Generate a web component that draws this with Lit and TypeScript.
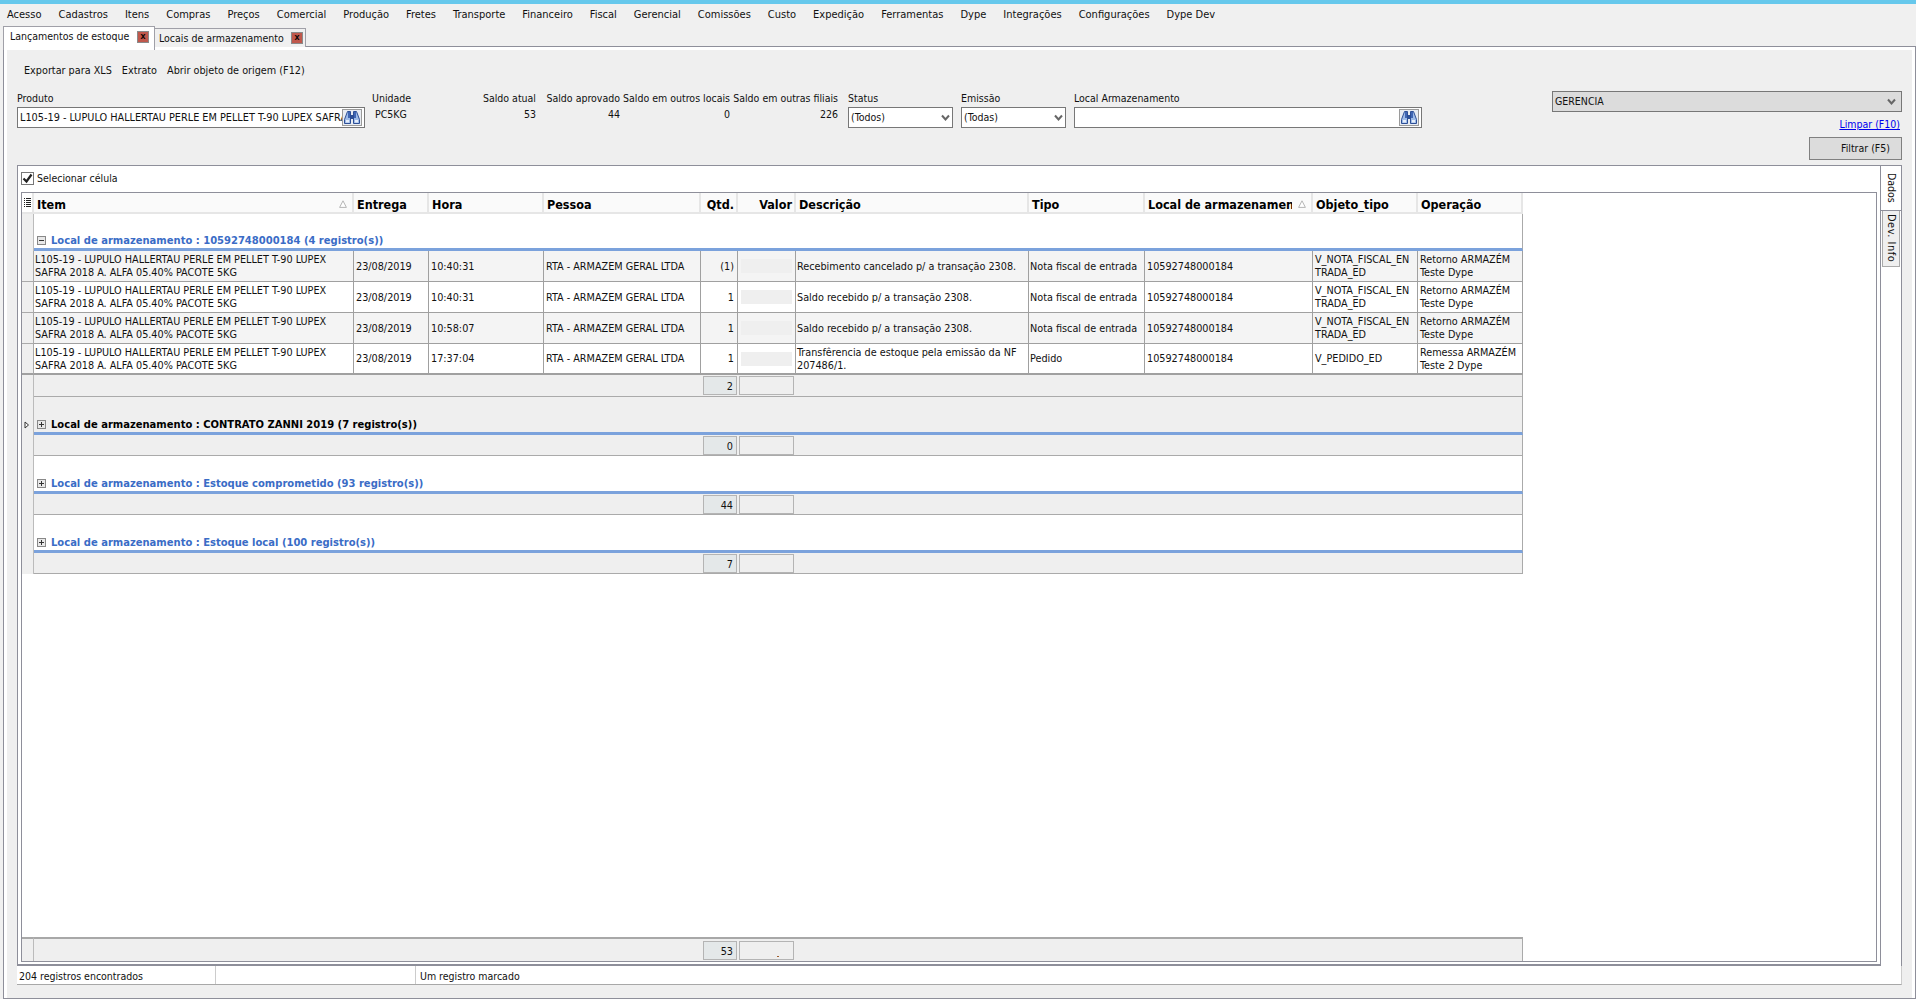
import { LitElement, css, html, svg } from 'lit';
import { customElement } from 'lit/decorators.js';

const menu = ['Acesso', 'Cadastros', 'Itens', 'Compras', 'Preços', 'Comercial', 'Produção', 'Fretes', 'Transporte', 'Financeiro', 'Fiscal', 'Gerencial', 'Comissões', 'Custo', 'Expedição', 'Ferramentas', 'Dype', 'Integrações', 'Configurações', 'Dype Dev'];

const item = 'L105-19 - LUPULO HALLERTAU PERLE EM PELLET T-90 LUPEX SAFRA 2018 A. ALFA 05.40% PACOTE 5KG';
const pessoa = 'RTA - ARMAZEM GERAL LTDA';
const nfe = 'V_NOTA_FISCAL_EN\u200bTRADA_ED';
const rows = [
  ['23/08/2019', '10:40:31', '(1)', 'Recebimento cancelado p/ a transação 2308.', 'Nota fiscal de entrada', nfe, 'Retorno ARMAZÉM Teste Dype'],
  ['23/08/2019', '10:40:31', '1', 'Saldo recebido p/ a transação 2308.', 'Nota fiscal de entrada', nfe, 'Retorno ARMAZÉM Teste Dype'],
  ['23/08/2019', '10:58:07', '1', 'Saldo recebido p/ a transação 2308.', 'Nota fiscal de entrada', nfe, 'Retorno ARMAZÉM Teste Dype'],
  ['23/08/2019', '17:37:04', '1', 'Transfêrencia de estoque pela emissão da NF 207486/1.', 'Pedido', 'V_PEDIDO_ED', 'Remessa ARMAZÉM Teste 2 Dype'],
];

const groups = [
  { name: 'Estoque comprometido (93 registro(s))', total: '44' },
  { name: 'Estoque local (100 registro(s))', total: '7' },
];

const binoculars = svg`<svg width="16" height="15" viewBox="0 0 16 15">
  <path d="M3.5 1.5h3v12h-6v-4z" fill="#9dbbe8" stroke="#2d4f96"/>
  <path d="M12.5 1.5h-3v12h6v-4z" fill="#9dbbe8" stroke="#2d4f96"/>
  <path d="M6.5 5h3v4h-3z" fill="#2d4f96"/>
  <path d="M4 2h2v6H4zM10 2h2v6h-2z" fill="#3f66b4"/>
  <path d="M2 10h3v2.5H2zM11 10h3v2.5h-3z" fill="#e6eefa"/>
</svg>`;

const chevron = svg`<svg width="9" height="8" viewBox="0 0 9 8"><path d="M1 1.5l3.5 4 3.5-4" fill="none" stroke="#666" stroke-width="2"/></svg>`;

const sortArrow = svg`<svg width="8" height="8" viewBox="0 0 8 8"><path d="M4 .8L7.4 7.4H.6z" fill="#fff" stroke="#b5b5b5"/></svg>`;

@customElement('app-root')
export class AppRoot extends LitElement {
  static styles = css`
    :host {
      display: block;
      width: 1916px;
      height: 999px;
      overflow: hidden;
      background: #f0f0f0;
      color: #111;
      font: 10.5px/13px "DejaVu Sans Condensed", "DejaVu Sans", Tahoma, sans-serif;
    }
    .topbar { height: 4px; background: #66c8ec; }
    .menu { display: flex; gap: 17px; height: 20px; padding-left: 7px; align-items: center; font-size: 11px; }

    .tabs { display: flex; box-sizing: border-box; height: 22px; padding: 2px 0 0 3px; align-items: flex-start; position: relative; z-index: 1; }
    .tab { display: flex; align-items: center; justify-content: space-between; box-sizing: border-box; white-space: nowrap; }
    .tab.on { width: 152px; height: 24px; padding: 0 5px 4px 6px; background: #fff; border: 1px solid #a0a0a8; border-bottom: 0; }
    .tab.off { width: 151px; height: 19px; margin-top: 2px; padding: 0 2px 0 4px; background: #f0f0f0; border: 1px solid #a0a0a8; border-left: 0; border-bottom: 0; }
    .x { width: 12px; height: 12px; box-sizing: border-box; background: #c0584c; border: 1px solid #8a8a8a; color: #000; font: bold 9px/9px "Liberation Sans", sans-serif; text-align: center; }

    .panel { box-sizing: border-box; width: 1913px; height: 953px; margin-left: 3px; border: 1px solid #8e8f9a; background: #efefef; box-shadow: inset 3px 3px 0 #fff, inset -3px 0 0 #fff; padding: 3px 13px 13px 13px; }

    .filters { display: flex; height: 115px; justify-content: space-between; }
    .toolbar { display: flex; gap: 10px; height: 40px; padding-left: 7px; align-items: center; font-size: 10.75px; }
    .fields { display: grid; grid-template-columns: 355px 100px 64px 84px 110px 108px 123px 113px 348px; grid-template-rows: 17px 21px; }
    .num { text-align: right; white-space: nowrap; }
    .lbl { align-self: center; white-space: nowrap; }
    .val { padding-top: 1px; }
    .pad { padding-left: 10px; }
    .box { box-sizing: border-box; height: 21px; display: flex; align-items: center; justify-content: space-between; background: #fff; border: 1px solid #777; padding: 0 2px; white-space: nowrap; overflow: hidden; }
    .box .text { overflow: hidden; flex: 1; font-size: 10.8px; }
    .search { flex: none; box-sizing: border-box; width: 20px; height: 17px; background: #e8ecf2; border: 1px solid #9a9a9a; display: flex; align-items: center; justify-content: center; }
    .w105 { width: 105px; }
    .w348 { width: 348px; }

    .right { width: 350px; padding-top: 41px; display: flex; flex-direction: column; align-items: flex-end; }
    .gerencia { width: 350px; background: #dcdcdc; padding-right: 5px; }
    .link { margin: 6px 2px 0 0; color: #0000ee; text-decoration: underline; }
    .filter { box-sizing: border-box; width: 93px; height: 23px; margin-top: 6px; background: #dcdcdc; border: 1px solid #808080; text-align: right; padding: 4px 11px 0 0; }

    .content { display: flex; flex-direction: column; height: 820px; width: 1885px; }
    .workspace { flex: 1; display: flex; min-height: 0; background: #fff; border: 1px solid #8e8f9a; border-bottom: 0; }
    .pane { flex: 1; display: flex; flex-direction: column; min-width: 0; border-right: 1px solid #8e8f9a; border-bottom: 2px solid #8e8f9a; padding: 0 3px 2px 3px; }
    .check { display: flex; height: 26px; padding-bottom: 1px; box-sizing: border-box; align-items: center; gap: 3px; }
    .cb { box-sizing: border-box; width: 13px; height: 13px; background: #fff; border: 1px solid #777; }
    .cb svg { display: block; }

    .grid { flex: 1; display: flex; flex-direction: column; min-height: 0; border: 1px solid #8e8f9a; background: #fff; font-size: 10.75px; }
    .row { display: grid; grid-template-columns: 12px 320px 75px 115px 157px 37px 58px 233px 116px 168px 105px 105px; width: 1501px; }
    .head { height: 21px; }
    .hc { box-sizing: border-box; display: flex; align-items: center; justify-content: space-between; background: #fafafa; border-right: 2px solid #e6e6e6; border-bottom: 2px solid #e6e6e6; padding: 3px 5px 0 3px; font: bold 12.5px/15px "DejaVu Sans Condensed", "DejaVu Sans", sans-serif; color: #000; white-space: nowrap; overflow: hidden; }
    .hc.r { justify-content: flex-end; padding-right: 2px; }
    .hc .clip { overflow: hidden; }
    .hc svg { flex: none; margin-left: 6px; }
    .hi { justify-content: center; padding: 0; background: #fff; }

    .group { display: grid; grid-template-columns: 12px 1489px; width: 1501px; }
    .ind { background: #efefef; border-right: 1px solid #bbb; display: flex; align-items: flex-end; }
    .gh { box-sizing: border-box; height: 38px; display: flex; align-items: flex-end; padding: 0 0 0 3px; gap: 5px; border-bottom: 3px solid #7ba2dc; border-right: 1px solid #aaa; font: bold 11.1px/15px "DejaVu Sans Condensed", "DejaVu Sans", sans-serif; color: #3a6cc6; }
    .gh.first { height: 37px; }
    .gh.sel { background: #efefef; color: #000; }
    .pm { box-sizing: border-box; flex: none; width: 9px; height: 9px; margin-bottom: 3px; border: 1px solid #888; background: #e8e8e8; position: relative; }
    .pm::before { content: ''; position: absolute; left: 1px; top: 3px; width: 5px; height: 1px; background: #333; }
    .pm.plus::after { content: ''; position: absolute; left: 3px; top: 1px; width: 1px; height: 5px; background: #333; }
    .focus { width: 100%; height: 100%; position: relative; }
    .focus svg { position: absolute; left: 2px; bottom: 6px; }

    .data { height: 31px; }
    .data.odd .c { background: #f4f4f4; }
    .data .rowind { background: #efefef; border-right: 1px solid #aaa; border-bottom: 1px solid #aaa; }
    .c { box-sizing: border-box; display: flex; align-items: center; padding: 0 2px; border-right: 1px solid #a0a0a0; border-bottom: 1px solid #a0a0a0; overflow: hidden; background: #fff; }
    .c.tight { padding: 0 1px; }
    .c.n { justify-content: flex-end; padding-right: 3px; }
    .blur { width: 51px; height: 14px; margin: 0 auto; background: #efefef; }
    .data.last .c, .data.last .rowind { border-bottom: 2px solid #a0a0a0; }

    .foot { box-sizing: border-box; height: 21px; background: #efefef; border-bottom: 1px solid #aaa; border-right: 1px solid #aaa; display: grid; grid-template-columns: 669px 35px 56px; align-items: center; }
    .foot.first { height: 22px; }
    .tot { box-sizing: border-box; height: 19px; background: #e4e8e9; border: 1px solid #b4b4b4; text-align: right; padding: 3px 3px 0 0; margin-right: 1px; }
    .tot.blank { background: #efefef; margin: 0 0 0 1px; }

    .spacer { flex: 1; }
    .grand { display: grid; grid-template-columns: 12px 1489px; width: 1501px; height: 24px; }
    .grand .foot { height: 24px; border-top: 2px solid #a8a8a8; border-bottom: 0; }
    .grand .ind { border-top: 2px solid #a8a8a8; }
    .dot { position: relative; }
    .dot::after { content: ''; position: absolute; left: 37px; bottom: 2px; width: 2px; height: 1px; background: #a06030; }

    .side { width: 20px; flex: none; background: #fff; }
    .vt { writing-mode: vertical-rl; box-sizing: border-box; display: flex; align-items: center; }
    .vt.on { width: 20px; height: 45px; padding-top: 7px; background: #fff; border-bottom: 1px solid #8e8f9a; }
    .vt.off { width: 18px; height: 56px; margin-left: 1px; padding-top: 3px; background: #efefef; border: 1px solid #aaa; border-top: 0; font-size: 11px; letter-spacing: .5px; }

    .status { box-sizing: border-box; height: 19px; display: grid; grid-template-columns: 199px 200px 1fr; background: #fff; border-bottom: 1px solid #a8a8a8; border-right: 1px solid #ccc; align-items: center; }
    .status div { height: 100%; box-sizing: border-box; padding: 4px 0 0 2px; border-right: 1px solid #ccc; }
    .status div + div + div { padding-left: 4px; border-right: 0; }
  `;

  private renderGroupFoot(total: string, first = false) {
    return html`<div class="foot ${first ? 'first' : ''}"><span></span><div class="tot">${total}</div><div class="tot blank"></div></div>`;
  }

  private renderRow(r: string[], i: number) {
    const cls = `row data ${i % 2 === 0 ? 'odd' : ''} ${i === rows.length - 1 ? 'last' : ''}`;
    return html`<div class=${cls}>
      <div class="rowind"></div>
      <div class="c tight">${item}</div>
      <div class="c">${r[0]}</div>
      <div class="c">${r[1]}</div>
      <div class="c">${pessoa}</div>
      <div class="c n">${r[2]}</div>
      <div class="c"><div class="blur"></div></div>
      <div class="c tight">${r[3]}</div>
      <div class="c tight">${r[4]}</div>
      <div class="c">10592748000184</div>
      <div class="c">${r[5]}</div>
      <div class="c">${r[6]}</div>
    </div>`;
  }

  render() {
    return html`
      <div class="topbar"></div>
      <div class="menu">${menu.map(m => html`<span>${m}</span>`)}</div>
      <div class="tabs">
        <div class="tab on">Lançamentos de estoque <span class="x">x</span></div>
        <div class="tab off">Locais de armazenamento <span class="x">x</span></div>
      </div>
      <div class="panel">
        <div class="filters">
          <div>
            <div class="toolbar"><span>Exportar para XLS</span><span>Extrato</span><span>Abrir objeto de origem (F12)</span></div>
            <div class="fields">
              <span class="lbl">Produto</span>
              <span class="lbl">Unidade</span>
              <span class="lbl num">Saldo atual</span>
              <span class="lbl num">Saldo aprovado</span>
              <span class="lbl num">Saldo em outros locais</span>
              <span class="lbl num">Saldo em outras filiais</span>
              <span class="lbl pad">Status</span>
              <span class="lbl">Emissão</span>
              <span class="lbl">Local Armazenamento</span>

              <div class="box" style="width:348px"><span class="text">L105-19 - LUPULO HALLERTAU PERLE EM PELLET T-90 LUPEX SAFRA 2018 A. ALFA</span><span class="search">${binoculars}</span></div>
              <span class="val" style="padding-left:3px">PC5KG</span>
              <span class="val num">53</span>
              <span class="val num">44</span>
              <span class="val num">0</span>
              <span class="val num">226</span>
              <div class="pad"><div class="box w105"><span>(Todos)</span>${chevron}</div></div>
              <div class="box w105"><span>(Todas)</span>${chevron}</div>
              <div class="box w348"><span></span><span class="search">${binoculars}</span></div>
            </div>
          </div>
          <div class="right">
            <div class="box gerencia"><span>GERENCIA</span>${chevron}</div>
            <span class="link">Limpar (F10)</span>
            <div class="filter">Filtrar (F5)</div>
          </div>
        </div>

        <div class="content">
          <div class="workspace">
            <div class="pane">
              <div class="check">
                <span class="cb"><svg width="11" height="11" viewBox="0 0 11 11"><path d="M1.5 5.5l3 3 5-7" fill="none" stroke="#222" stroke-width="2.2"/></svg></span>
                <span>Selecionar célula</span>
              </div>
              <div class="grid">
                <div class="row head">
                  <div class="hc hi"><svg style="margin:0" width="7" height="9" viewBox="0 0 7 9"><path d="M0 .5h1M2 .5h5M0 2.5h1M2 2.5h5M0 4.5h1M2 4.5h5M0 6.5h1M2 6.5h5M0 8.5h1M2 8.5h5" stroke="#222"/></svg></div>
                  <div class="hc"><span>Item</span>${sortArrow}</div>
                  <div class="hc">Entrega</div>
                  <div class="hc">Hora</div>
                  <div class="hc">Pessoa</div>
                  <div class="hc r">Qtd.</div>
                  <div class="hc r">Valor</div>
                  <div class="hc">Descrição</div>
                  <div class="hc">Tipo</div>
                  <div class="hc"><span class="clip">Local de armazenamento</span>${sortArrow}</div>
                  <div class="hc">Objeto_tipo</div>
                  <div class="hc">Operação</div>
                </div>

                <div class="group"><div class="ind"></div><div class="gh first"><span class="pm"></span>Local de armazenamento : 10592748000184 (4 registro(s))</div></div>
                ${rows.map((r, i) => this.renderRow(r, i))}
                <div class="group"><div class="ind"></div>${this.renderGroupFoot('2', true)}</div>

                <div class="group">
                  <div class="ind"><div class="focus"><svg width="6" height="8" viewBox="0 0 6 8"><path d="M1 1l3.5 3L1 7z" fill="#fff" stroke="#333"/></svg></div></div>
                  <div class="gh sel"><span class="pm plus"></span>Local de armazenamento : CONTRATO ZANNI 2019 (7 registro(s))</div>
                </div>
                <div class="group"><div class="ind"></div>${this.renderGroupFoot('0')}</div>

                ${groups.map(g => html`
                  <div class="group"><div class="ind"></div><div class="gh"><span class="pm plus"></span>Local de armazenamento : ${g.name}</div></div>
                  <div class="group"><div class="ind"></div>${this.renderGroupFoot(g.total)}</div>
                `)}

                <div class="spacer"></div>
                <div class="grand"><div class="ind"></div><div class="foot"><span></span><div class="tot">53</div><div class="tot blank dot"></div></div></div>
              </div>
            </div>
            <div class="side">
              <div class="vt on">Dados</div>
              <div class="vt off">Dev. Info</div>
            </div>
          </div>
          <div class="status"><div>204 registros encontrados</div><div></div><div>Um registro marcado</div></div>
        </div>
      </div>
    `;
  }
}
